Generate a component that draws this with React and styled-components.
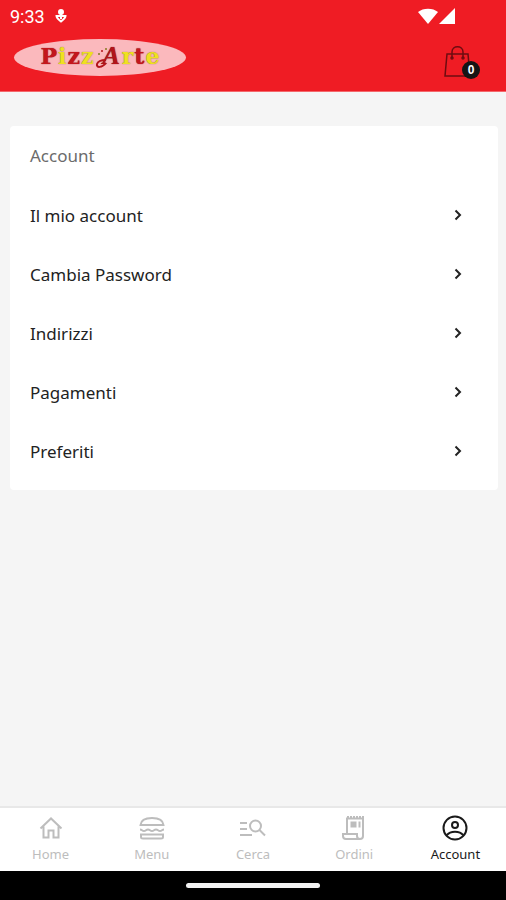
import styled, { createGlobalStyle } from "styled-components";

const GlobalStyle = createGlobalStyle`
  * {
    box-sizing: border-box;
  }

  body {
    margin: 0;
    background-color: #f5f5f5;
    font-family: "Noto Sans", "Open Sans", sans-serif;
    color: #222;
  }
`;

const Screen = styled.div`
  display: flex;
  flex-direction: column;
  min-height: 100vh;
`;

const Header = styled.header`
  background-color: #ef1c24;
  border-bottom: 1px solid #f4686c;
`;

const StatusBar = styled.div`
  display: flex;
  align-items: center;
  height: 32px;
  padding: 0 50px 0 10px;
  color: #fff;
  font-family: Roboto, sans-serif;
  font-size: 18px;

  time {
    margin-right: 10px;
  }
`;

const Signals = styled.div`
  display: flex;
  gap: 1px;
  margin-left: auto;
`;

const AppBar = styled.div`
  display: flex;
  align-items: center;
  justify-content: space-between;
  height: 59px;
  padding: 0 24px 8px 14px;
`;

const Logo = styled.a`
  display: flex;
  align-items: center;
  justify-content: center;
  gap: 1px;
  width: 172px;
  height: 37px;
  padding-bottom: 4px;
  border-radius: 50%;
  background-color: #fbb9bd;
  font-family: "DejaVu Serif", serif;
  font-size: 22px;
  font-weight: 700;
  line-height: 24px;
  text-decoration: none;
`;

const Letter = styled.span`
  color: ${props => props.$yellow ? "#f0e020" : "#c4161c"};
  text-shadow: 0 0 1px ${props => props.$yellow ? "#6f6620" : "#7a1014"};
`;

const ScriptLetter = styled.span`
  position: relative;
  padding: 0 1px 0 8px;
  color: #b3141a;
  font-family: "Liberation Serif", serif;
  font-size: 26px;
  font-style: italic;
  text-shadow: 0 0 1px #5d1515;
`;

const Swash = styled.svg`
  position: absolute;
  left: 0;
  top: 0;
  width: 28px;
  height: 28px;
`;

const CartButton = styled.button`
  position: relative;
  width: 38px;
  height: 42px;
  padding: 0;
  border: none;
  background: none;
  text-align: left;
  cursor: pointer;
`;

const CartCount = styled.span`
  position: absolute;
  right: 2px;
  bottom: 0;
  width: 18px;
  height: 18px;
  border-radius: 50%;
  background-color: #151515;
  color: #fff;
  font-size: 12px;
  font-weight: 700;
  line-height: 18px;
  text-align: center;
`;

const Content = styled.main`
  flex: 1;
  padding: 34px 8px 34px 10px;
`;

const Card = styled.section`
  padding-bottom: 10px;
  border-radius: 4px;
  background-color: #fff;
`;

const CardTitle = styled.h1`
  margin: 0;
  padding: 0 20px;
  color: #6b6b6b;
  font-size: 17px;
  font-weight: 400;
  line-height: 59px;
`;

const MenuList = styled.ul`
  margin: 0;
  padding: 0;
  list-style: none;
`;

const MenuLink = styled.a`
  display: flex;
  align-items: center;
  justify-content: space-between;
  height: 59px;
  padding: 1px 36px 0 20px;
  color: #222;
  font-size: 17px;
  text-decoration: none;
`;

const TabBar = styled.nav`
  display: grid;
  grid-template-columns: repeat(5, 1fr);
  height: 65px;
  border-top: 2px solid #e8e8e8;
  background-color: #fff;
`;

const Tab = styled.a`
  display: flex;
  flex-direction: column;
  align-items: center;
  gap: 2px;
  padding-top: 6px;
  color: ${props => props.$active ? "#1a1a1a" : "#bdbdbd"};
  font-size: 13px;
  line-height: 20px;
  text-decoration: none;
`;

const TabIcon = styled.svg`
  width: 28px;
  height: 28px;
  fill: none;
  stroke: currentColor;
  stroke-width: 2;
`;

const SystemBar = styled.div`
  display: flex;
  align-items: center;
  justify-content: center;
  height: 29px;
  background-color: #000;
`;

const HomeHandle = styled.div`
  width: 134px;
  height: 5px;
  border-radius: 3px;
  background-color: #f2f2f2;
`;

const menuItems = ["Il mio account", "Cambia Password", "Indirizzi", "Pagamenti", "Preferiti"];

const tabs = [
  {
    label: "Home",
    icon: <path d="M3.5 14.5 14 4.5l10.5 10M6.5 12.5v11h5v-7h5v7h5v-11" />,
  },
  {
    label: "Menu",
    icon: (
      <>
        <path d="M2.5 11C3 5.5 8 4 14 4s11 1.5 11.5 7z" />
        <path d="M2 15.5c2 0 2 1.5 4 1.5s2-1.5 4-1.5 2 1.5 4 1.5 2-1.5 4-1.5 2 1.5 4 1.5 2-1.5 4-1.5" />
        <path d="M3 20.5h22V23c0 1-1 1.5-2 1.5H5c-1 0-2-.5-2-1.5z" />
      </>
    ),
  },
  {
    label: "Cerca",
    icon: (
      <>
        <circle cx="16.5" cy="12" r="5.5" />
        <path d="M20.5 16l5.5 5.5M1 9h7M1 15h7M1 21h12" />
      </>
    ),
  },
  {
    label: "Ordini",
    icon: (
      <>
        <path d="M7 20V4.5h16V22c0 2-1 3-3 3H6c-2 0-3-1-3-3v-2h14v2c0 2 1 3 3 3" />
        <path d="M10.500 9h6M10.500 12h6M18.500 9h2M18.500 12h2" strokeWidth="3" />
        <path d="M7 3h17" strokeDasharray="2 1" />
      </>
    ),
  },
  {
    label: "Account",
    icon: (
      <>
        <circle cx="14" cy="14" r="11.5" />
        <circle cx="14" cy="11" r="3" />
        <path d="M5.5 21.5c4-5 13-5 17 0" />
      </>
    ),
  },
];

const App = () => {
  return (
    <>
      <GlobalStyle />
      <Screen>
        <Header>
          <StatusBar>
            <time>9:33</time>
            <svg width="12" height="16" viewBox="0 0 12 16" fill="none" stroke="#fff" strokeWidth="2">
              <circle cx="6" cy="4" r="2" fill="#fff" />
              <path d="M1.5 8h9c0 2-2 3.5-4.5 5.5C3.5 11.5 1.5 10 1.5 8zM6 6v5" />
            </svg>
            <Signals>
              <svg width="20" height="17" viewBox="0 0 20 17" fill="#fff">
                <path d="M0 4C5-.5 15-.5 20 4L10 16z" />
              </svg>
              <svg width="17" height="17" viewBox="0 0 17 17" fill="#fff">
                <path d="M16 0v16H0z" />
              </svg>
            </Signals>
          </StatusBar>
          <AppBar>
            <Logo href="#home" aria-label="PizzArte">
              <Letter>P</Letter>
              <Letter $yellow>i</Letter>
              <Letter>z</Letter>
              <Letter $yellow>z</Letter>
              <ScriptLetter>
                A
                <Swash viewBox="0 0 28 28" fill="none" aria-hidden="true">
                  <path d="M12 19c-4 5-10 5-9 1 1-3 5-4 9-4" stroke="#b3141a" strokeWidth="2" />
                  <circle cx="5" cy="10" r="1" fill="#857a20" />
                  <circle cx="8" cy="7" r="1" fill="#b3141a" />
                  <circle cx="12" cy="5" r="1" fill="#857a20" />
                </Swash>
              </ScriptLetter>
              <Letter $yellow>r</Letter>
              <Letter>t</Letter>
              <Letter $yellow>e</Letter>
            </Logo>
            <CartButton type="button" aria-label="Carrello">
              <svg width="28" height="40" viewBox="0 0 28 40" fill="none" stroke="#6d0c10" strokeWidth="1.5">
                <path d="M3 17h21l2 22H1z" />
                <path d="M8 21v-6c0-7 11-7 11 0v6" />
                <circle cx="8" cy="21" r="1" />
                <circle cx="19" cy="21" r="1" />
              </svg>
              <CartCount>0</CartCount>
            </CartButton>
          </AppBar>
        </Header>

        <Content>
          <Card>
            <CardTitle>Account</CardTitle>
            <MenuList>
              {menuItems.map((item) => (
                <li key={item}>
                  <MenuLink href="#account">
                    {item}
                    <svg width="8" height="12" viewBox="0 0 8 12" fill="none" stroke="currentColor" strokeWidth="2">
                      <path d="M1.5 1.5 6 6l-4.5 4.5" />
                    </svg>
                  </MenuLink>
                </li>
              ))}
            </MenuList>
          </Card>
        </Content>

        <TabBar>
          {tabs.map((tab) => (
            <Tab key={tab.label} href="#tab" $active={tab.label === "Account"}>
              <TabIcon viewBox="0 0 28 28">{tab.icon}</TabIcon>
              {tab.label}
            </Tab>
          ))}
        </TabBar>
        <SystemBar>
          <HomeHandle />
        </SystemBar>
      </Screen>
    </>
  );
}

export default App;
